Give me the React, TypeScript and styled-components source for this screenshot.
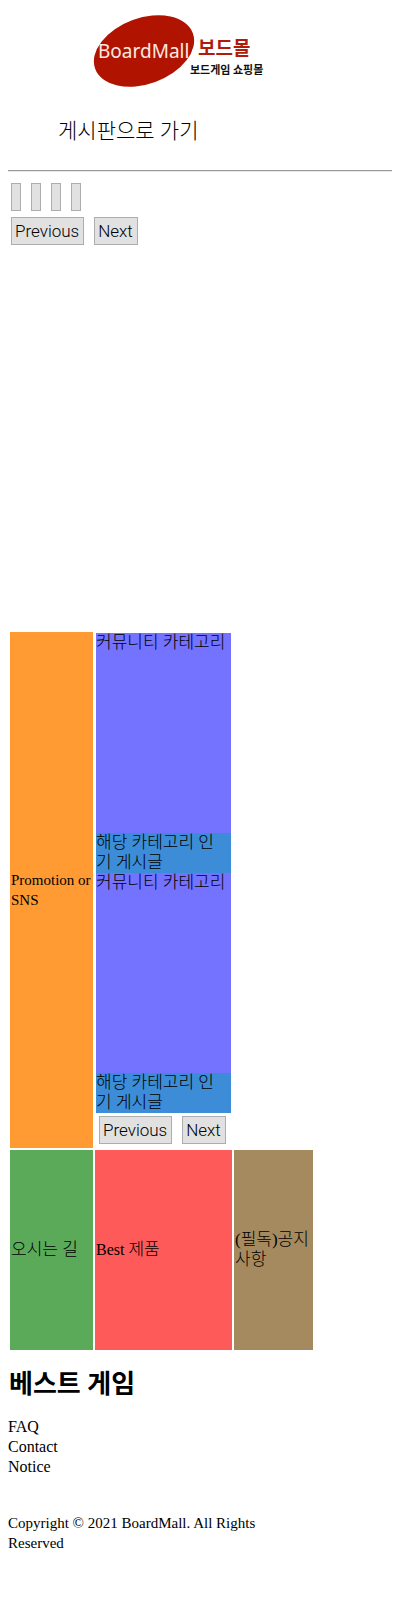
import React from "react";
import styled, { createGlobalStyle } from "styled-components";

const GlobalStyle = createGlobalStyle`
  body {
    margin: 0;
    background: #fff;
    color: #000;
    font-family: "Liberation Serif", "Noto Sans CJK KR", serif;
    font-size: 16px;
    line-height: 20px;
  }
`;

const Page = styled.div`
  padding: 0 8px 40px;
`;

const Header = styled.header`
  display: flex;
  flex-direction: column;
  align-items: flex-start;
  border-bottom: 1px solid #9a9a9a;
  box-shadow: 0 1px 0 #e6e6e6;
`;

const HomeLink = styled.a`
  display: block;
  margin: 12px 0 0 80px;
  svg {
    display: block;
  }
`;

const BoardLink = styled.a`
  margin: 27px 0 25px 50px;
  color: #000;
  font-size: 21px;
  font-weight: 300;
  line-height: 28px;
  text-decoration: none;
`;

const ButtonRow = styled.div`
  display: flex;
  gap: 10px;
  padding: 3px;
`;

const Button = styled.button`
  box-sizing: border-box;
  height: 28px;
  min-width: 10px;
  padding: 0 4px 0 3px;
  border: 1px solid #adadad;
  border-radius: 0;
  background: #e1e1e1;
  color: #000;
  font-family: Roboto, "Liberation Sans", sans-serif;
  font-size: 17px;
  font-weight: 300;
  line-height: 26px;
`;

const Carousel = styled.section`
  min-height: 450px;
  padding-top: 9px;
`;

const Board = styled.main`
  display: grid;
  grid-template-columns: 83px 137px 79px;
  gap: 2px;
  padding: 2px;
`;

const Cell = styled.section<{ $color?: string; $tall?: boolean }>`
  display: flex;
  flex-direction: column;
  justify-content: center;
  box-sizing: border-box;
  min-height: ${(p) => (p.$tall ? 200 : 0)}px;
  padding: 1px;
  background: ${(p) => p.$color ?? "transparent"};
`;

const CommunityCell = styled(Cell)`
  grid-column: 2 / 4;
  width: 137px;
`;

const Korean = styled.span`
  font-size: 17px;
  font-weight: 300;
`;

const Small = styled.span`
  font-size: 15px;
`;

const Category = styled.div`
  height: 200px;
  background: #7373ff;
  white-space: nowrap;
`;

const Popular = styled.div`
  padding-right: 8px;
  background: #3c8cd7;
`;

const Heading = styled.h2`
  margin: 16px 0 15px 1px;
  font-size: 26px;
  line-height: 34px;
`;

const FooterLinks = styled.nav`
  display: flex;
  flex-direction: column;
  align-items: flex-start;
  a {
    color: #000;
    text-decoration: none;
  }
`;

const Copyright = styled.p`
  max-width: 264px;
  margin: 36px 0 0;
`;

const Logo = () => (
  <svg width="180" height="78" viewBox="0 0 180 78" role="img" aria-label="BoardMall 보드몰">
    <ellipse cx="56" cy="39" rx="52" ry="33" transform="rotate(-20 56 39)" fill="#b01400" />
    <text x="10" y="46" fill="#fbe9e0" fontFamily='"Noto Sans", sans-serif' fontSize="19">
      BoardMall
    </text>
    <text x="110" y="43" fill="#b01c0c" fontFamily='"Noto Sans CJK KR", sans-serif' fontSize="19" fontWeight="700">
      보드몰
    </text>
    <text x="102" y="62" fill="#111" fontFamily='"Noto Sans CJK KR", sans-serif' fontSize="11" fontWeight="700">
      보드게임 쇼핑몰
    </text>
  </svg>
);

const Community = () => (
  <>
    <Category>
      <Korean>커뮤니티 카테고리</Korean>
    </Category>
    <Popular>
      <Korean>해당 카테고리 인기 게시글</Korean>
    </Popular>
  </>
);

const slides = [1, 2, 3, 4];

export default function App() {
  return (
    <Page>
      <GlobalStyle />
      <Header>
        <HomeLink href="#">
          <Logo />
        </HomeLink>
        <BoardLink href="#board">게시판으로 가기</BoardLink>
      </Header>
      <Carousel>
        <ButtonRow>
          {slides.map((n) => (
            <Button key={n} type="button" aria-label={`Slide ${n}`} />
          ))}
        </ButtonRow>
        <ButtonRow>
          <Button type="button">Previous</Button>
          <Button type="button">Next</Button>
        </ButtonRow>
      </Carousel>
      <Board>
        <Cell $color="#ff9b32">
          <Small>Promotion or SNS</Small>
        </Cell>
        <CommunityCell>
          <Community />
          <Community />
          <ButtonRow>
            <Button type="button">Previous</Button>
            <Button type="button">Next</Button>
          </ButtonRow>
        </CommunityCell>
        <Cell $color="#5aaa5a" $tall>
          <Korean>오시는 길</Korean>
        </Cell>
        <Cell $color="#ff5a5a" $tall>
          <span>
            Best <Korean>제품</Korean>
          </span>
        </Cell>
        <Cell $color="#a58a5f" $tall>
          <Korean>(필독)공지사항</Korean>
        </Cell>
      </Board>
      <Heading>베스트 게임</Heading>
      <footer>
        <FooterLinks>
          <a href="#faq">FAQ</a>
          <a href="#contact">Contact</a>
          <a href="#notice">Notice</a>
        </FooterLinks>
        <Copyright>
          <Small>Copyright © 2021 BoardMall. All Rights Reserved</Small>
        </Copyright>
      </footer>
    </Page>
  );
}
